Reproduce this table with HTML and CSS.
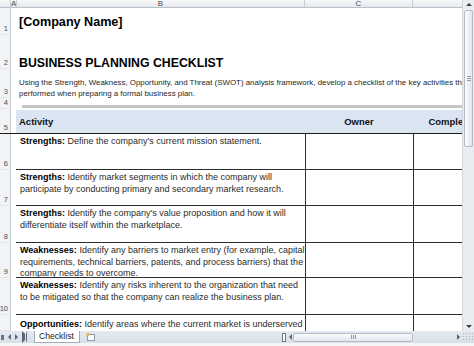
FILE: index.html
```html
<!DOCTYPE html>
<html>
<head>
<meta charset="utf-8">
<link rel="stylesheet" href="styles.css">
</head>
<body>
<div class="app">
  <div class="main">
    <div class="sheet">
      <div class="colhead">
        <div class="ch ch-corner"></div>
        <div class="ch ch-a">A</div>
        <div class="ch ch-b">B</div>
        <div class="ch ch-c">C</div>
        <div class="ch ch-d"></div>
      </div>
      <div class="row r1"><div class="rh">1</div><div class="ca"><div class="title">[Company Name]</div></div></div>
      <div class="row r2"><div class="rh">2</div><div class="ca"><div class="heading">BUSINESS PLANNING CHECKLIST</div></div></div>
      <div class="row r3"><div class="rh">3</div><div class="ca"><div class="desc">Using the Strength, Weakness, Opportunity, and Threat (SWOT) analysis framework, develop a checklist of the key activities that should be<br>performed when preparing a formal business plan.</div></div></div>
      <div class="row r4"><div class="rh">4</div><div class="ca"><div class="bar"></div></div></div>
      <div class="row r5"><div class="rh">5</div><div class="ca">
        <div class="thead"><div class="th th-act">Activity</div><div class="th th-c">Owner</div><div class="th th-c">Completed</div></div>
      </div></div>
      <div class="row r6"><div class="rh">6</div><div class="ca"><div class="trow"><div class="sp"></div><div class="act"><b>Strengths:</b> Define the company's current mission statement.</div><div class="tc"></div><div class="tc"></div></div></div></div>
      <div class="row r7"><div class="rh">7</div><div class="ca"><div class="trow"><div class="sp"></div><div class="act"><b>Strengths:</b> Identify market segments in which the company will<br>participate by conducting primary and secondary market research.</div><div class="tc"></div><div class="tc"></div></div></div></div>
      <div class="row r8"><div class="rh">8</div><div class="ca"><div class="trow"><div class="sp"></div><div class="act"><b>Strengths:</b> Identify the company's value proposition and how it will<br>differentiate itself within the marketplace.</div><div class="tc"></div><div class="tc"></div></div></div></div>
      <div class="row r9"><div class="rh">9</div><div class="ca"><div class="trow"><div class="sp"></div><div class="act"><b>Weaknesses:</b> Identify any barriers to market entry (for example, capital<br>requirements, technical barriers, patents, and process barriers) that the<br>company needs to overcome.</div><div class="tc"></div><div class="tc"></div></div></div></div>
      <div class="row r10"><div class="rh">10</div><div class="ca"><div class="trow"><div class="sp"></div><div class="act"><b>Weaknesses:</b> Identify any risks inherent to the organization that need<br>to be mitigated so that the company can realize the business plan.</div><div class="tc"></div><div class="tc"></div></div></div></div>
      <div class="row r11"><div class="rh"></div><div class="ca"><div class="trow last"><div class="sp"></div><div class="act"><b>Opportunities:</b> Identify areas where the current market is underserved</div><div class="tc"></div><div class="tc"></div></div></div></div>
    </div>
    <div class="vscroll">
      <div class="vbtn"><span class="tri-up"></span></div>
      <div class="vthumb"><span class="vgrip"></span></div>
      <div class="vtrack"></div>
      <div class="vbtn"><span class="tri-down"></span></div>
    </div>
  </div>
  <div class="bottom">
    <div class="nav">
      <span class="nav-first"></span>
      <span class="tri-left"></span>
      <span class="tri-right"></span>
      <span class="nav-last"></span>
    </div>
    <div class="tab">Checklist</div>
    <div class="newsheet">
      <svg width="11" height="10" viewBox="0 0 11 10"><rect x="2.5" y="2.5" width="7" height="6" fill="#fff" stroke="#8a9bb2"/><circle cx="3" cy="2.5" r="1.7" fill="#f0b446"/></svg>
    </div>
    <div class="tabfill"></div>
    <div class="hscroll">
      <span class="split"></span>
      <span class="tri-left"></span>
      <div class="hthumb"><span class="hgrip"></span></div>
      <div class="htrack"></div>
      <span class="tri-right"></span>
    </div>
    <div class="corner-grip"></div>
  </div>
</div>
</body>
</html>
```

FILE: styles.css
```css
html, body {
  margin: 0;
  padding: 0;
}
body {
  width: 474px;
  height: 346px;
  overflow: hidden;
  background: #fff;
  font-family: "Liberation Sans", Arial, sans-serif;
}
.app {
  display: flex;
  flex-direction: column;
  width: 474px;
  height: 346px;
}
.main {
  display: flex;
  height: 331px;
  flex: none;
}
.sheet {
  width: 462px;
  flex: none;
  overflow: hidden;
  display: flex;
  flex-direction: column;
}
.colhead {
  display: flex;
  height: 8px;
  flex: none;
  box-sizing: border-box;
  background: linear-gradient(#f6f7f9, #e6e9ee);
  border-bottom: 1px solid #b9c0ca;
}
.ch {
  box-sizing: border-box;
  flex: none;
  border-right: 1px solid #c5ccd5;
  font-size: 8px;
  line-height: 7px;
  color: #4d4d4d;
  text-align: center;
  overflow: hidden;
}
.ch-corner { width: 11px; }
.ch-a { width: 6px; }
.ch-b { width: 288px; }
.ch-c { width: 108px; }
.ch-d { width: 60px; border-right: none; }

.row {
  display: flex;
  flex: none;
}
.rh {
  width: 11px;
  flex: none;
  box-sizing: border-box;
  border-right: 1px solid #c5ccd5;
  border-bottom: 1px solid #e1e5ea;
  background: #f1f3f5;
  font-size: 7.5px;
  line-height: 8px;
  color: #505050;
  display: flex;
  align-items: flex-end;
  justify-content: flex-end;
  padding: 0 2px 1px 0;
}
.ca {
  flex: 1;
  min-width: 0;
}
.r1 { height: 27px; }
.r2 { height: 34px; }
.r3 { height: 29px; }
.r4 { height: 11px; }
.r5 { height: 25px; box-sizing: border-box; border-bottom: 1px solid #1c1c1c; }
.r6 { height: 36px; }
.r7 { height: 36px; }
.r8 { height: 37px; }
.r9 { height: 35px; }
.r10 { height: 37px; }
.r11 { height: 16px; }
.r5 .rh { border-bottom: none; }

.title {
  padding: 7px 0 0 8px;
  font-size: 12.6px;
  line-height: 15px;
  font-weight: bold;
  color: #000;
  white-space: nowrap;
}
.heading {
  padding: 21px 0 0 8px;
  font-size: 12.3px;
  line-height: 14px;
  font-weight: bold;
  color: #000;
  white-space: nowrap;
}
.desc {
  padding: 8px 0 0 8px;
  font-size: 7.9px;
  line-height: 11.3px;
  color: #262626;
  white-space: nowrap;
}
.bar {
  margin: 7px 0 0 11px;
  height: 3px;
  background: #c6c6c6;
}
.thead {
  display: grid;
  grid-template-columns: 289px 108px 80px;
  margin: 1px 0 0 5px;
  height: 23px;
  background: #dbe5f1;
  align-items: center;
  font-size: 9.5px;
  font-weight: bold;
  color: #111;
}
.th-act { padding-left: 3px; }
.th-c { text-align: center; }

.trow {
  display: grid;
  grid-template-columns: 5px 289px 108px 80px;
  height: 100%;
}
.act {
  box-sizing: border-box;
  border-bottom: 1px solid #2e2e2e;
  padding: 2px 0 0 4px;
  font-size: 9px;
  line-height: 11.5px;
  color: #2b2b2b;
  white-space: nowrap;
  overflow: hidden;
}
.act b { color: #000; }
.tc {
  box-sizing: border-box;
  border-left: 1px solid #2e2e2e;
  border-bottom: 1px solid #2e2e2e;
}
.trow.last .act, .trow.last .tc { border-bottom: none; }
.trow.last .act { padding-top: 4px; }

.vscroll {
  width: 12px;
  flex: none;
  box-sizing: border-box;
  background: #e9edf2;
  border-left: 1px solid #d0d6de;
  display: flex;
  flex-direction: column;
  align-items: center;
}
.vbtn {
  height: 9px;
  width: 100%;
  flex: none;
  display: flex;
  align-items: center;
  justify-content: center;
}
.vthumb {
  margin-top: 1px;
  width: 9px;
  height: 137px;
  flex: none;
  box-sizing: border-box;
  border: 1px solid #b2bbc7;
  border-radius: 2px;
  background: linear-gradient(to right, #fbfcfd, #e3e7ed);
  display: flex;
  align-items: center;
  justify-content: center;
}
.vgrip {
  width: 4px;
  height: 5px;
  background: repeating-linear-gradient(#8e99a8 0 1px, transparent 1px 2px);
}
.vtrack { flex: 1; }
.tri-up {
  width: 0; height: 0;
  border-left: 3px solid transparent;
  border-right: 3px solid transparent;
  border-bottom: 3px solid #3c3c3c;
}
.tri-down {
  width: 0; height: 0;
  border-left: 3px solid transparent;
  border-right: 3px solid transparent;
  border-top: 3px solid #3c3c3c;
}
.tri-left {
  width: 0; height: 0;
  border-top: 3px solid transparent;
  border-bottom: 3px solid transparent;
  border-right: 3px solid #5a6577;
}
.tri-right {
  width: 0; height: 0;
  border-top: 3px solid transparent;
  border-bottom: 3px solid transparent;
  border-left: 3px solid #5a6577;
}

.bottom {
  height: 15px;
  flex: none;
  box-sizing: border-box;
  border-bottom: 3px solid #f3f5f7;
  background: linear-gradient(#e4e9ef, #d9e0e8);
  display: flex;
  align-items: center;
}
.nav {
  width: 32px;
  flex: none;
  display: flex;
  align-items: center;
  gap: 4px;
  padding-left: 1px;
  box-sizing: border-box;
}
.nav-first {
  width: 3px;
  height: 5px;
  background: #6a7486;
}
.nav-last {
  width: 5px;
  height: 6px;
  box-sizing: border-box;
  border-left: 3px solid #5a6577;
  border-right: 1px solid #5a6577;
  border-top: 3px solid transparent;
  border-bottom: 3px solid transparent;
  height: 0;
  padding: 3px 0;
}
.tab {
  height: 12px;
  box-sizing: border-box;
  margin-left: 2px;
  padding: 0 5px 0 4px;
  background: #fff;
  border: 1px solid #a3adba;
  border-top: none;
  font-size: 8.6px;
  line-height: 11px;
  color: #222;
  align-self: flex-start;
}
.newsheet {
  width: 14px;
  margin-left: 4px;
  display: flex;
  align-items: center;
  justify-content: center;
}
.tabfill { flex: 1; }
.hscroll {
  width: 180px;
  flex: none;
  display: flex;
  align-items: center;
  height: 10px;
}
.split {
  width: 2px;
  height: 7px;
  border: 1px solid #6d7686;
  background: #fff;
  margin-right: 3px;
}
.hthumb {
  margin-left: 1px;
  width: 120px;
  height: 9px;
  box-sizing: border-box;
  border: 1px solid #b2bbc7;
  border-radius: 2px;
  background: linear-gradient(#fbfcfd, #e3e7ed);
  display: flex;
  align-items: center;
  justify-content: center;
}
.hgrip {
  width: 5px;
  height: 4px;
  background: repeating-linear-gradient(to right, #8e99a8 0 1px, transparent 1px 2px);
}
.htrack { flex: 1; }
.hscroll .tri-right { margin-right: 2px; }
.corner-grip {
  width: 12px;
  height: 10px;
  flex: none;
  background: radial-gradient(circle, #9aa4b1 0.6px, transparent 0.9px) 0 0 / 3px 3px;
  opacity: 0.8;
}
```
